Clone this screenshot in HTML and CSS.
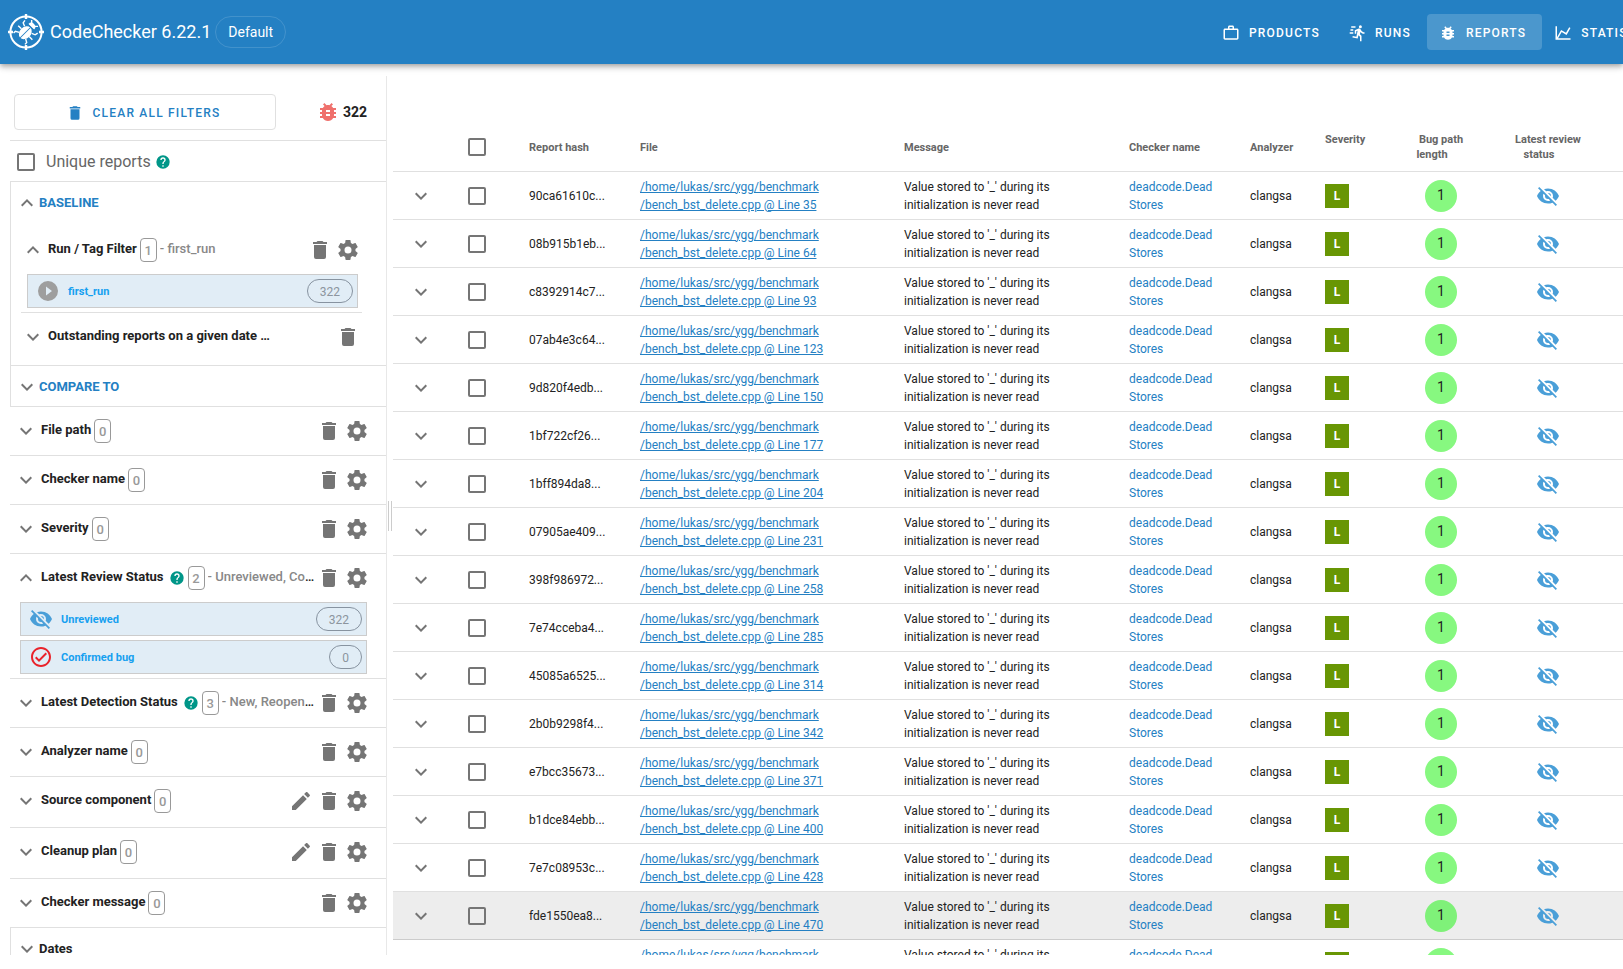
FILE: index.html
```html
<!DOCTYPE html>
<html lang="en">
<head>
<meta charset="utf-8">
<title>CodeChecker - Reports</title>
<link rel="stylesheet" href="styles.css">
</head>
<body>
<svg class="sprite" aria-hidden="true">
  <symbol id="i-bug" viewBox="0 0 24 24"><path d="M14,12H10V10H14M14,16H10V14H14M20,8H17.19C16.74,7.22 16.12,6.55 15.37,6.04L17,4.41L15.59,3L13.42,5.17C12.96,5.06 12.5,5 12,5C11.5,5 11.04,5.06 10.59,5.17L8.41,3L7,4.41L8.62,6.04C7.88,6.55 7.26,7.22 6.81,8H4V10H6.09C6.04,10.33 6,10.66 6,11V12H4V14H6V15C6,15.34 6.04,15.67 6.09,16H4V18H6.81C7.85,19.79 9.78,21 12,21C14.22,21 16.15,19.79 17.19,18H20V16H17.91C17.96,15.67 18,15.34 18,15V14H20V12H18V11C18,10.66 17.96,10.33 17.91,10H20V8Z"/></symbol>
  <symbol id="i-briefcase" viewBox="0 0 24 24"><path d="M20,6C20.58,6 21.05,6.2 21.42,6.59C21.8,7 22,7.45 22,8V19C22,19.55 21.8,20 21.42,20.41C21.05,20.8 20.58,21 20,21H4C3.42,21 2.95,20.8 2.58,20.41C2.2,20 2,19.55 2,19V8C2,7.45 2.2,7 2.58,6.59C2.95,6.2 3.42,6 4,6H8V4C8,3.42 8.2,2.95 8.58,2.58C8.95,2.2 9.42,2 10,2H14C14.58,2 15.05,2.2 15.42,2.58C15.8,2.95 16,3.42 16,4V6H20M4,8V19H20V8H4M14,6V4H10V6H14Z"/></symbol>
  <symbol id="i-run" viewBox="0 0 24 24"><path d="M16.5,5.5A2,2 0 0,0 18.5,3.5A2,2 0 0,0 16.5,1.5A2,2 0 0,0 14.5,3.5A2,2 0 0,0 16.5,5.5M12.9,19.4L13.9,15L16,17V23H18V15.5L15.9,13.5L16.5,10.5C17.89,12.09 19.89,13 22,13V11C20.24,11.03 18.6,10.11 17.7,8.6L16.7,7C16.34,6.4 15.7,6 15,6C14.7,6 14.5,6.1 14.2,6.1L9,8.3V13H11V9.6L12.8,8.9L11.2,17L6.3,16L5.9,18L12.9,19.4M4,9A1,1 0 0,1 3,8A1,1 0 0,1 4,7H7V9H4M5,5A1,1 0 0,1 4,4A1,1 0 0,1 5,3H10V5H5M3,13A1,1 0 0,1 2,12A1,1 0 0,1 3,11H7V13H3Z"/></symbol>
  <symbol id="i-chart" viewBox="0 0 24 24"><path d="M16,11.78L20.24,4.45L21.97,5.45L16.74,14.5L10.23,10.75L5.46,19H22V21H2V3H4V17.54L9.5,8L16,11.78Z"/></symbol>
  <symbol id="i-delete" viewBox="0 0 24 24"><path d="M19,4H15.5L14.5,3H9.5L8.5,4H5V6H19M6,19A2,2 0 0,0 8,21H16A2,2 0 0,0 18,19V7H6V19Z"/></symbol>
  <symbol id="i-cog" viewBox="0 0 24 24"><path d="M12,15.5A3.5,3.5 0 0,1 8.5,12A3.5,3.5 0 0,1 12,8.5A3.5,3.5 0 0,1 15.5,12A3.5,3.5 0 0,1 12,15.5M19.43,12.97C19.47,12.65 19.5,12.33 19.5,12C19.5,11.67 19.47,11.34 19.43,11L21.54,9.37C21.73,9.22 21.78,8.95 21.66,8.73L19.66,5.27C19.54,5.05 19.27,4.96 19.05,5.05L16.56,6.05C16.04,5.66 15.5,5.32 14.87,5.07L14.5,2.42C14.46,2.18 14.25,2 14,2H10C9.75,2 9.54,2.18 9.5,2.42L9.13,5.07C8.5,5.32 7.96,5.66 7.44,6.05L4.95,5.05C4.73,4.96 4.46,5.05 4.34,5.27L2.34,8.73C2.21,8.95 2.27,9.22 2.46,9.37L4.57,11C4.53,11.34 4.5,11.67 4.5,12C4.5,12.33 4.53,12.65 4.57,12.97L2.46,14.63C2.27,14.78 2.21,15.05 2.34,15.27L4.34,18.73C4.46,18.95 4.73,19.03 4.95,18.95L7.44,17.94C7.96,18.34 8.5,18.68 9.13,18.93L9.5,21.58C9.54,21.82 9.75,22 10,22H14C14.25,22 14.46,21.82 14.5,21.58L14.87,18.93C15.5,18.67 16.04,18.34 16.56,17.94L19.05,18.95C19.27,19.03 19.54,18.95 19.66,18.73L21.66,15.27C21.78,15.05 21.73,14.78 21.54,14.63L19.43,12.97Z"/></symbol>
  <symbol id="i-pencil" viewBox="0 0 24 24"><path d="M20.71,7.04C21.1,6.65 21.1,6 20.71,5.63L18.37,3.29C18,2.9 17.35,2.9 16.96,3.29L15.12,5.12L18.87,8.87M3,17.25V21H6.75L17.81,9.93L14.06,6.18L3,17.25Z"/></symbol>
  <symbol id="i-eye-off" viewBox="0 0 24 24"><path d="M11.83,9L15,12.16C15,12.11 15,12.05 15,12A3,3 0 0,0 12,9C11.94,9 11.89,9 11.83,9M7.53,9.8L9.08,11.35C9.03,11.56 9,11.77 9,12A3,3 0 0,0 12,15C12.22,15 12.44,14.97 12.65,14.92L14.2,16.47C13.53,16.8 12.79,17 12,17A5,5 0 0,1 7,12C7,11.21 7.2,10.47 7.53,9.8M2,4.27L4.28,6.55L4.73,7C3.08,8.3 1.78,10 1,12C2.73,16.39 7,19.5 12,19.5C13.55,19.5 15.03,19.2 16.38,18.66L16.81,19.08L19.73,22L21,20.73L3.27,3M12,7A5,5 0 0,1 17,12C17,12.64 16.87,13.26 16.64,13.82L19.57,16.75C21.07,15.5 22.27,13.86 23,12C21.27,7.61 17,4.5 12,4.5C10.6,4.5 9.26,4.75 8,5.2L10.17,7.35C10.74,7.13 11.35,7 12,7Z"/></symbol>
  <symbol id="i-help" viewBox="0 0 24 24"><path d="M15.07,11.25L14.17,12.17C13.45,12.89 13,13.5 13,15H11V14.5C11,13.39 11.45,12.39 12.17,11.67L13.41,10.41C13.78,10.05 14,9.55 14,9C14,7.89 13.1,7 12,7A2,2 0 0,0 10,9H8A4,4 0 0,1 12,5A4,4 0 0,1 16,9C16,9.88 15.64,10.67 15.07,11.25M13,19H11V17H13M12,2A10,10 0 0,0 2,12A10,10 0 0,0 12,22A10,10 0 0,0 22,12C22,6.47 17.5,2 12,2Z"/></symbol>
  <symbol id="i-play" viewBox="0 0 24 24"><path d="M10,16.5V7.5L16,12M12,2A10,10 0 0,0 2,12A10,10 0 0,0 12,22A10,10 0 0,0 22,12A10,10 0 0,0 12,2Z"/></symbol>
  <symbol id="i-check" viewBox="0 0 24 24"><path d="M12 2C6.5 2 2 6.5 2 12S6.5 22 12 22 22 17.5 22 12 17.5 2 12 2M12 20C7.59 20 4 16.41 4 12S7.59 4 12 4 20 7.59 20 12 16.41 20 12 20M16.59 7.58L10 14.17L7.41 11.59L6 13L10 17L18 9L16.59 7.58Z"/></symbol>
  <symbol id="i-down" viewBox="0 0 24 24"><path d="M7.41,8.58L12,13.17L16.59,8.58L18,10L12,16L6,10L7.41,8.58Z"/></symbol>
  <symbol id="i-up" viewBox="0 0 24 24"><path d="M7.41,15.41L12,10.83L16.59,15.41L18,14L12,8L6,14L7.41,15.41Z"/></symbol>
</svg>

<div class="app">
  <header class="topbar">
    <svg class="logo" viewBox="0 0 36 36" aria-hidden="true">
      <circle cx="18" cy="18" r="15.6" fill="none" stroke="#fff" stroke-width="2"/>
      <path d="M18 0V5M18 31V36M0 18H5M31 18H36" stroke="#fff" stroke-width="2.4"/>
      <g transform="rotate(45 18 18)" fill="none" stroke="#fff" stroke-width="1.4">
        <ellipse cx="18" cy="19" rx="5.6" ry="7.2" fill="#fff" stroke="none"/>
        <path d="M14 10.600a4 4 0 0 1 8 0z" fill="#fff" stroke="none"/>
        <path d="M16 8L13.5 5.500M20 8L22.500 5.500M13 15L9.500 13.500L9 10.500M23 15L26.500 13.500L27 10.500M12.500 19H8M23.500 19H28M13.500 23L10 25L10 27.500M22.500 23L26 25L26 27.500"/>
        <path d="M18 12V26.500M12 11.300H24" stroke="#2480c3" stroke-width="1"/>
      </g>
    </svg>
    <span class="brand">CodeChecker 6.22.1</span>
    <span class="product">Default</span>
    <nav class="nav">
      <a class="nav-btn" href="#"><svg class="icon sm"><use href="#i-briefcase"/></svg>Products</a>
      <a class="nav-btn" href="#"><svg class="icon sm"><use href="#i-run"/></svg>Runs</a>
      <a class="nav-btn active" href="#"><svg class="icon sm"><use href="#i-bug"/></svg>Reports</a>
      <a class="nav-btn" href="#"><svg class="icon sm"><use href="#i-chart"/></svg>Statistics</a>
    </nav>
  </header>

  <div class="panes">
    <aside class="filters">
      <div class="summary">
        <button class="clear-btn" type="button"><svg class="icon sm"><use href="#i-delete"/></svg>Clear all filters</button>
        <span class="total"><svg class="icon bug"><use href="#i-bug"/></svg>322</span>
      </div>
      <div class="unique">
        <input class="check" type="checkbox" id="unique"><label for="unique">Unique reports</label><svg class="icon help"><use href="#i-help"/></svg>
      </div>

      <section class="group">
        <button class="group-head" type="button"><svg class="icon"><use href="#i-up"/></svg>BASELINE</button>
        <div class="group-body">
          <div class="filter open">
            <div class="filter-head">
              <svg class="icon"><use href="#i-up"/></svg>
              <div class="title"><b>Run / Tag Filter</b><span class="count">1</span><span class="picked"><span>- first_run</span></span></div>
              <button class="act" type="button" aria-label="Clear"><svg class="icon"><use href="#i-delete"/></svg></button>
              <button class="act" type="button" aria-label="Settings"><svg class="icon"><use href="#i-cog"/></svg></button>
            </div>
            <div class="item"><svg class="icon play"><use href="#i-play"/></svg><span class="item-name">first_run</span><span class="chip">322</span></div>
          </div>
          <div class="filter">
            <div class="filter-head">
              <svg class="icon"><use href="#i-down"/></svg>
              <div class="title"><b>Outstanding reports on a given date …</b></div>
              <button class="act" type="button" aria-label="Clear"><svg class="icon"><use href="#i-delete"/></svg></button>
            </div>
          </div>
        </div>
      </section>
      <section class="group">
        <button class="group-head" type="button"><svg class="icon"><use href="#i-down"/></svg>COMPARE TO</button>
      </section>

      <div class="list">
        <div class="filter"><div class="filter-head">
          <svg class="icon"><use href="#i-down"/></svg>
          <div class="title"><b>File path</b><span class="count">0</span></div>
          <button class="act" type="button" aria-label="Clear"><svg class="icon"><use href="#i-delete"/></svg></button>
          <button class="act" type="button" aria-label="Settings"><svg class="icon"><use href="#i-cog"/></svg></button>
        </div></div>
        <div class="filter"><div class="filter-head">
          <svg class="icon"><use href="#i-down"/></svg>
          <div class="title"><b>Checker name</b><span class="count">0</span></div>
          <button class="act" type="button" aria-label="Clear"><svg class="icon"><use href="#i-delete"/></svg></button>
          <button class="act" type="button" aria-label="Settings"><svg class="icon"><use href="#i-cog"/></svg></button>
        </div></div>
        <div class="filter"><div class="filter-head">
          <svg class="icon"><use href="#i-down"/></svg>
          <div class="title"><b>Severity</b><span class="count">0</span></div>
          <button class="act" type="button" aria-label="Clear"><svg class="icon"><use href="#i-delete"/></svg></button>
          <button class="act" type="button" aria-label="Settings"><svg class="icon"><use href="#i-cog"/></svg></button>
        </div></div>
        <div class="filter open">
          <div class="filter-head">
            <svg class="icon"><use href="#i-up"/></svg>
            <div class="title"><b>Latest Review Status</b><svg class="icon help"><use href="#i-help"/></svg><span class="count">2</span><span class="picked"><span>- Unreviewed, Confirmed bug</span></span></div>
            <button class="act" type="button" aria-label="Clear"><svg class="icon"><use href="#i-delete"/></svg></button>
            <button class="act" type="button" aria-label="Settings"><svg class="icon"><use href="#i-cog"/></svg></button>
          </div>
          <div class="item"><svg class="icon eye"><use href="#i-eye-off"/></svg><span class="item-name">Unreviewed</span><span class="chip">322</span></div>
          <div class="item"><svg class="icon confirmed"><use href="#i-check"/></svg><span class="item-name">Confirmed bug</span><span class="chip">0</span></div>
        </div>
        <div class="filter"><div class="filter-head">
          <svg class="icon"><use href="#i-down"/></svg>
          <div class="title"><b>Latest Detection Status</b><svg class="icon help"><use href="#i-help"/></svg><span class="count">3</span><span class="picked"><span>- New, Reopened, Unresolved</span></span></div>
          <button class="act" type="button" aria-label="Clear"><svg class="icon"><use href="#i-delete"/></svg></button>
          <button class="act" type="button" aria-label="Settings"><svg class="icon"><use href="#i-cog"/></svg></button>
        </div></div>
        <div class="filter"><div class="filter-head">
          <svg class="icon"><use href="#i-down"/></svg>
          <div class="title"><b>Analyzer name</b><span class="count">0</span></div>
          <button class="act" type="button" aria-label="Clear"><svg class="icon"><use href="#i-delete"/></svg></button>
          <button class="act" type="button" aria-label="Settings"><svg class="icon"><use href="#i-cog"/></svg></button>
        </div></div>
        <div class="filter editable"><div class="filter-head">
          <svg class="icon"><use href="#i-down"/></svg>
          <div class="title"><b>Source component</b><span class="count">0</span></div>
          <button class="act" type="button" aria-label="Edit"><svg class="icon"><use href="#i-pencil"/></svg></button>
          <button class="act" type="button" aria-label="Clear"><svg class="icon"><use href="#i-delete"/></svg></button>
          <button class="act" type="button" aria-label="Settings"><svg class="icon"><use href="#i-cog"/></svg></button>
        </div></div>
        <div class="filter editable"><div class="filter-head">
          <svg class="icon"><use href="#i-down"/></svg>
          <div class="title"><b>Cleanup plan</b><span class="count">0</span></div>
          <button class="act" type="button" aria-label="Edit"><svg class="icon"><use href="#i-pencil"/></svg></button>
          <button class="act" type="button" aria-label="Clear"><svg class="icon"><use href="#i-delete"/></svg></button>
          <button class="act" type="button" aria-label="Settings"><svg class="icon"><use href="#i-cog"/></svg></button>
        </div></div>
        <div class="filter"><div class="filter-head">
          <svg class="icon"><use href="#i-down"/></svg>
          <div class="title"><b>Checker message</b><span class="count">0</span></div>
          <button class="act" type="button" aria-label="Clear"><svg class="icon"><use href="#i-delete"/></svg></button>
          <button class="act" type="button" aria-label="Settings"><svg class="icon"><use href="#i-cog"/></svg></button>
        </div></div>
      </div>
      <section class="group">
        <button class="group-head plain" type="button"><svg class="icon"><use href="#i-down"/></svg>Dates</button>
      </section>
    </aside>

    <div class="splitter"><span class="grip"></span></div>

    <main class="reports">
      <table class="table">
        <colgroup>
          <col class="c-exp"><col class="c-check"><col class="c-hash"><col class="c-file"><col class="c-msg"><col class="c-checker"><col class="c-analyzer"><col class="c-sev"><col class="c-len"><col class="c-status"><col>
        </colgroup>
        <thead>
          <tr>
            <th></th>
            <th class="two"><input class="check" type="checkbox" aria-label="Select all"></th>
            <th>Report hash</th><th>File</th><th>Message</th><th>Checker name</th><th>Analyzer</th>
            <th class="two">Severity<br>&nbsp;</th>
            <th class="two mid">Bug path<br><span class="sorted">length</span></th>
            <th class="two mid">Latest review<br><span class="sorted">status</span></th>
            <th></th>
          </tr>
        </thead>
        <tbody id="rows"></tbody>
      </table>
    </main>
  </div>
</div>
<script src="app.js"></script>
</body>
</html>
```
FILE: styles.css
```css
* { box-sizing: border-box; }
body { margin: 0; font-family: Roboto, sans-serif; font-size: 12px; line-height: 18px; color: #222; background: #fff; }
button { display: block; font: inherit; color: inherit; background: none; border: 0; padding: 0; cursor: pointer; }
a { color: #2480c3; }
.sprite { display: none; }
.icon { width: 24px; height: 24px; flex: none; fill: #757575; display: block; }
.icon.sm { width: 18px; height: 18px; fill: currentColor; }
.icon.help { width: 16px; height: 16px; fill: #009688; }
.icon.eye { fill: #4a9fd8; }
.app { display: flex; flex-direction: column; height: 100vh; overflow: hidden; }

.topbar { display: flex; align-items: center; flex: none; height: 64px; padding-left: 8px; background: #2480c3; color: #fff; position: relative; box-shadow: 0 2px 4px -1px rgba(0,0,0,.2), 0 4px 5px rgba(0,0,0,.14), 0 1px 10px rgba(0,0,0,.12); }
.logo { width: 36px; height: 36px; flex: none; }
.brand { margin-left: 6px; font-size: 18px; line-height: 24px; white-space: nowrap; }
.product { margin-left: 4px; padding: 0 12px; height: 32px; line-height: 30px; border: 1px solid rgba(255,255,255,.14); border-radius: 16px; font-size: 14px; }
.nav { display: flex; flex: 0 0 413px; overflow: hidden; margin-left: auto; }
.nav-btn { display: flex; align-items: center; flex: none; gap: 9px; height: 36px; padding: 1px 16px 0 12px; border-radius: 4px; color: #fff; text-decoration: none; font-weight: 500; letter-spacing: .1em; text-transform: uppercase; }
.nav-btn.active { background: rgba(255,255,255,.18); }

.panes { display: flex; flex: 1; min-height: 0; padding: 12px 0 14px; }
.filters { flex: 0 0 387px; padding-left: 10px; border-right: 1px solid #e8e8e8; overflow: hidden; }
.summary { display: flex; align-items: center; justify-content: space-between; height: 64px; padding: 8px 19px 0 4px; }
.clear-btn { display: flex; align-items: center; justify-content: center; gap: 9px; width: 262px; height: 36px; padding: 1px 4px 0 0; border: 1px solid #e0e0e0; border-radius: 4px; color: #2480c3; font-weight: 500; letter-spacing: .1em; text-transform: uppercase; }
.total { display: flex; align-items: center; gap: 3px; font-size: 14px; font-weight: 700; }
.icon.bug { fill: #ef706c; }
.unique { display: flex; align-items: center; height: 41px; padding: 1px 0 0 7px; border-top: 1px solid #e0e0e0; font-size: 16px; color: #666; }
.unique label { margin: 0 4px 0 11px; }
.check { appearance: none; display: block; width: 18px; height: 18px; margin: 0; border: 2px solid #757575; border-radius: 2px; }

.group { border: 1px solid #e0e0e0; border-width: 1px 0 0 1px; }
.group-head { display: flex; align-items: center; width: 100%; height: 40px; padding: 1px 0 0 4px; font-size: 13px; font-weight: 700; color: #2480c3; }
.group-head.plain { color: #222; }
.group-body { padding: 4px 24px 4px 10px; }
.group-body .filter-head { padding: 0 2px 0 0; }
.group-body .item { margin: 0 4px 4px 6px; }
.group-body .filter + .filter { border-top: 1px solid #e0e0e0; }
.list .filter { border-top: 1px solid #e0e0e0; }
.filter-head { display: flex; align-items: center; height: 48px; padding: 0 17px 0 4px; }
.editable .filter-head { height: 50px; padding-bottom: 2px; }
.act + .act { margin-left: 4px; }
.title { display: flex; align-items: center; flex: 1; min-width: 0; height: 24px; margin-left: 3px; font-size: 13px; }
.title b { font-weight: 700; padding-bottom: 3px; white-space: nowrap; }
.title .help { margin: 0 3px 0 5px; }
.count { flex: none; width: 17px; height: 24px; margin-left: 3px; line-height: 24px; border: 1px solid #999; border-radius: 4px; text-align: center; font-weight: 500; color: #999; }
.title .help + .count { margin-left: 0; }
.picked { flex: 1; min-width: 0; margin-left: 3px; padding-bottom: 3px; overflow: hidden; text-overflow: ellipsis; white-space: nowrap; font-weight: 500; }
.picked span { color: #888; }
.item { display: flex; align-items: center; height: 34px; margin: 0 19px 4px 10px; padding: 0 4px 0 8px; border: 1px solid #ccc; background: #e1edf6; }
.item-name { flex: 1; margin-left: 8px; padding-top: 1px; font-size: 11px; font-weight: 700; color: #16a0f0; }
.icon.play { fill: #9e9e9e; }
.icon.confirmed { fill: #e9232b; }
.chip { height: 24px; padding: 0 12px; line-height: 24px; border: 1px solid #8793a0; border-radius: 12px; color: #8c959e; }

.splitter { display: flex; flex: 0 0 6px; align-items: center; justify-content: center; }
.grip { width: 4px; height: 30px; border: 1px solid #ccc; border-width: 0 1px; }
.reports { flex: 1; min-width: 0; overflow: hidden; }
.table { width: 100%; table-layout: fixed; border-collapse: separate; border-spacing: 0; }
.c-exp { width: 59px; } .c-check { width: 61px; } .c-hash { width: 111px; } .c-file { width: 264px; } .c-msg { width: 225px; } .c-checker { width: 121px; } .c-analyzer { width: 75px; } .c-sev { width: 80px; } .c-len { width: 104px; } .c-status { width: 110px; }
.table th, .table td { padding: 0 16px; text-align: left; border-bottom: 1px solid #e0e0e0; height: 48px; white-space: nowrap; }
.table th { height: 96px; padding-top: 48px; font-size: 11px; font-weight: 700; color: #666; }
.table th.two { padding-top: 46px; line-height: 15px; }
.table th.mid, .table td.mid { text-align: center; padding-left: 0; padding-right: 0; }
.sorted { padding-right: 18px; }
.table td.mid > * { margin: 0 auto; }
.checker { text-decoration: none; }
.sev { display: block; width: 24px; height: 24px; line-height: 24px; background: #689604; color: #fff; text-align: center; font-weight: 700; }
.len { display: block; width: 32px; height: 32px; line-height: 30px; border-radius: 50%; background: #87f880; font-size: 14px; }
.current td { background: #ededed; border-bottom-color: #ccc; }
.current .len { background: #7ff179; }
```
FILE: app.js
```js
const reports = [
  ["90ca61610c...", 35], ["08b915b1eb...", 64], ["c8392914c7...", 93], ["07ab4e3c64...", 123],
  ["9d820f4edb...", 150], ["1bf722cf26...", 177], ["1bff894da8...", 204], ["07905ae409...", 231],
  ["398f986972...", 258], ["7e74cceba4...", 285], ["45085a6525...", 314], ["2b0b9298f4...", 342],
  ["e7bcc35673...", 371], ["b1dce84ebb...", 400], ["7e7c08953c...", 428], ["fde1550ea8...", 470],
  ["", ""]
];
const current = 15;

document.getElementById("rows").innerHTML = reports.map(([hash, line], i) => `
  <tr${i === current ? ' class="current"' : ""}>
    <td><button type="button" aria-label="Expand"><svg class="icon"><use href="#i-down"/></svg></button></td>
    <td><input class="check" type="checkbox" aria-label="Select report"></td>
    <td>${hash}</td>
    <td><a href="#">/home/lukas/src/ygg/benchmark<br>/bench_bst_delete.cpp${line ? " @ Line " + line : ""}</a></td>
    <td>Value stored to '_' during its<br>initialization is never read</td>
    <td><a class="checker" href="#">deadcode.Dead<br>Stores</a></td>
    <td>clangsa</td>
    <td><span class="sev">L</span></td>
    <td class="mid"><span class="len">1</span></td>
    <td class="mid"><svg class="icon eye"><use href="#i-eye-off"/></svg></td>
    <td></td>
  </tr>`).join("");
```
